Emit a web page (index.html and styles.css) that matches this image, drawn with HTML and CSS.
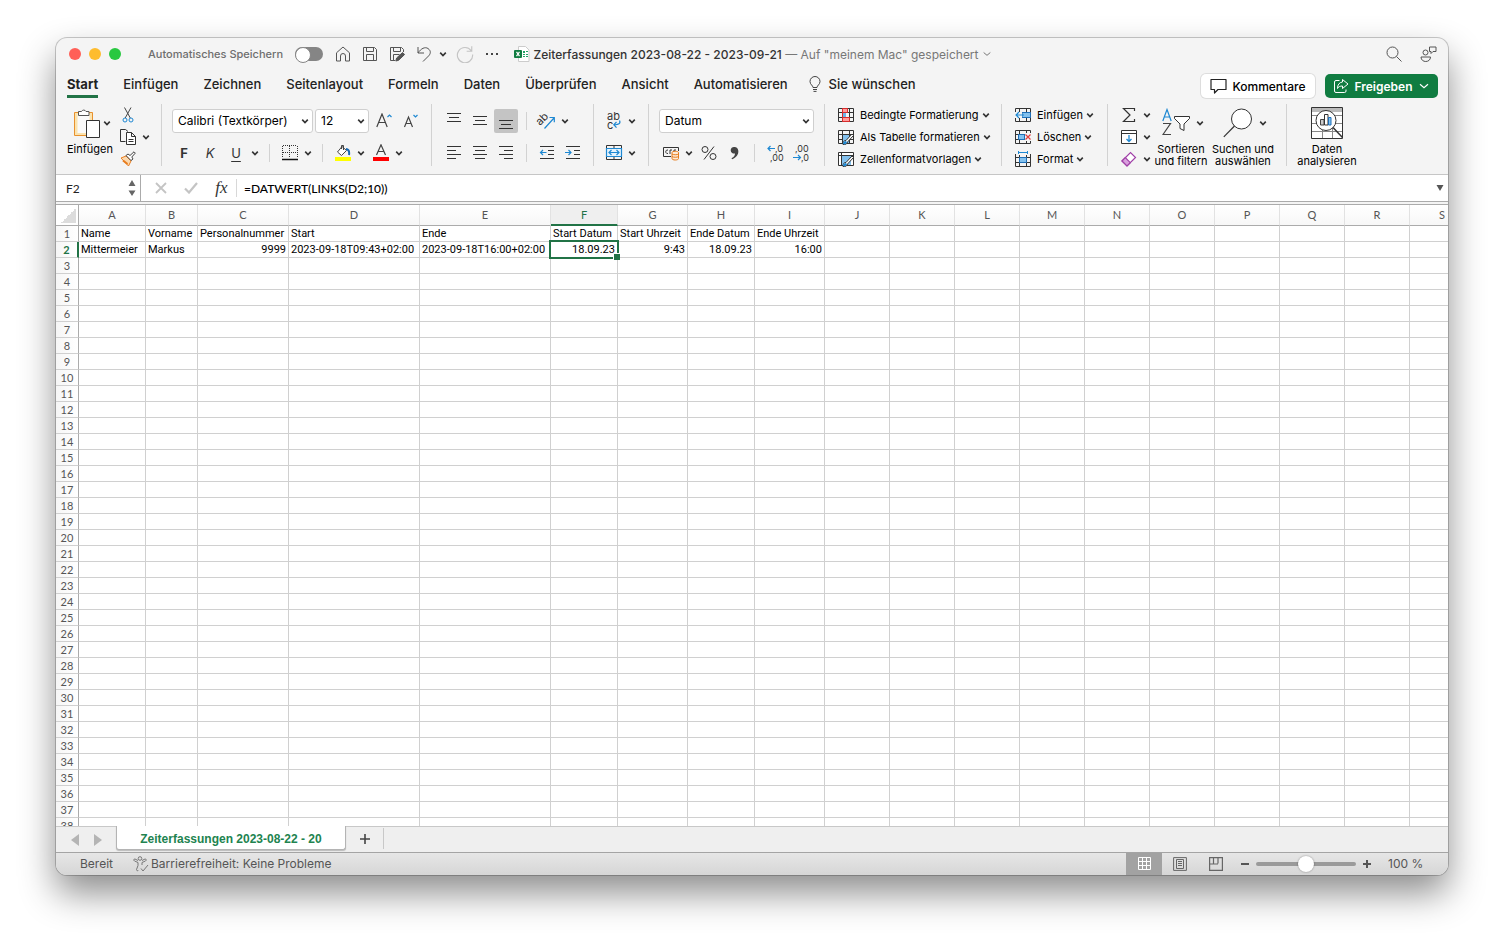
FILE: index.html
```html
<!DOCTYPE html>
<html lang="de">
<head>
    <meta charset="UTF-8">
    <meta name="viewport" content="width=device-width, initial-scale=1.0">
    <title>Zeiterfassungen 2023-08-22 - 2023-09-21</title>
    <link rel="stylesheet" href="styles.css">
</head>
<body>
    <svg class="defs" aria-hidden="true">
        <symbol id="caret" viewBox="0 0 12 12"><path d="M3.2 4.6L6 7.600L8.800 4.600" fill="none" stroke="#333" stroke-width="1.600"/></symbol>
        <symbol id="chev" viewBox="0 0 12 12"><path d="M2 4.200L6 7.600L10 4.200" fill="none" stroke="currentColor" stroke-width="1.200"/></symbol>
        <symbol id="cells" viewBox="0 0 16 16"><path d="M.5 1.500h15v13H.5zM.5 5.500h15M.5 10.500h15M4.500 1.500v13M11.500 1.500v13" fill="none" stroke="#333"/></symbol>
    </svg>

    <div class="window">
        <header class="titlebar">
            <div class="title-left">
                <div class="lights">
                    <button class="light red" aria-label="Schließen"></button>
                    <button class="light yellow" aria-label="Minimieren"></button>
                    <button class="light green" aria-label="Vollbild"></button>
                </div>
                <label class="autosave">Automatisches Speichern <input type="checkbox" class="toggle"></label>
                <div class="quick">
                    <button aria-label="Start"><svg width="16" height="16" viewBox="0 0 16 16"><path d="M1.500 6.800L8 1l6.500 5.800V15H10.500V10a2.500 2.500 0 0 0-5 0V15H1.500z"/></svg></button>
                    <button aria-label="Speichern"><svg width="16" height="16" viewBox="0 0 16 16"><path d="M1.500 1.500h11l2 2v11h-13zM4.500 1.500v4h7v-4M4.500 14.500v-6h7v6"/></svg></button>
                    <button aria-label="Kopie speichern"><svg width="16" height="16" viewBox="0 0 16 16"><path d="M14.500 6V3.500l-2-2h-11v13H6M4.500 1.500v4h7v-4M4.500 14.500v-6h6"/><path d="M6.800 15l.8-3 6-5.500 2 2-6 5.800z" fill="#555"/></svg></button>
                    <button aria-label="Rückgängig"><svg width="16" height="16" viewBox="0 0 16 16"><path d="M2 1v6h6M2 7c3-4.500 7-6.500 10-4.500 3.500 2.500 2.500 5.500.5 7.500L7 15.500"/></svg></button>
                    <button class="drop" aria-label="Mehr"><svg width="12" height="12"><use href="#caret"/></svg></button>
                    <button class="dim" aria-label="Wiederholen"><svg width="18" height="18" viewBox="0 0 16 16"><path d="M14 1v4.500H9.500M13.500 5A6.800 6.800 0 1 0 14.800 8.500"/></svg></button>
                    <button class="more" aria-label="Weitere Befehle"><svg width="14" height="4" viewBox="0 0 14 4"><path d="M1 1h2v2H1zM6 1h2v2H6zM11 1h2v2h-2z" fill="#444" stroke="none"/></svg></button>
                </div>
            </div>
            <div class="title">
                <svg width="16" height="16" viewBox="0 0 16 16"><path d="M4.500.5h7l3.500 3.500v11.500H4.500z" fill="#fff" stroke="#ccc"/><path d="M9 5h2v2H9zM9 8h2v1H9zM9 10h2v1H9zM12 5h2v1h-2zM12 8h2v1h-2zM12 10h2v1h-2z" fill="#21a366"/><rect y="4" width="8" height="8" rx="1" fill="#107c41"/><path d="M2.500 5.800l3 4.400M5.500 5.800l-3 4.400" stroke="#fff" stroke-width="1.200"/></svg>
                <span><span class="file">Zeiterfassungen 2023-08-22 - 2023-09-21</span> — Auf "meinem Mac" gespeichert</span>
                <svg width="10" height="10"><use href="#chev"/></svg>
            </div>
            <div class="title-right">
                <button aria-label="Suchen"><svg width="16" height="16" viewBox="0 0 16 16"><circle cx="6.500" cy="6.500" r="5.500"/><path d="M10.500 10.500l5 5"/></svg></button>
                <button aria-label="Feedback"><svg width="17" height="17" viewBox="0 0 17 17"><circle cx="5.500" cy="6.500" r="2.500"/><path d="M1 11h9.500c0 6-9.500 6-9.500 0zM9.500 1h6.500v4.500h-3L11 7.500V5.500H9.500z"/></svg></button>
            </div>
        </header>

        <nav class="tabs">
            <a href="#" class="tab active">Start</a>
            <a href="#" class="tab">Einfügen</a>
            <a href="#" class="tab">Zeichnen</a>
            <a href="#" class="tab">Seitenlayout</a>
            <a href="#" class="tab">Formeln</a>
            <a href="#" class="tab">Daten</a>
            <a href="#" class="tab">Überprüfen</a>
            <a href="#" class="tab">Ansicht</a>
            <a href="#" class="tab">Automatisieren</a>
            <a href="#" class="tab wish"><svg width="12" height="16" viewBox="0 0 12 16"><path d="M4 11.500c0-2-3-3-3-6a5 5 0 0 1 10 0c0 3-3 4-3 6zM4 13.500h4M4.500 15.400h3" fill="none" stroke="#444"/></svg>Sie wünschen</a>
            <div class="tab-actions">
                <button class="btn comments"><svg width="17" height="16" viewBox="0 0 17 16"><path d="M1 1.500h15v10H8l-3.500 3.500v-3.500H1z" fill="none" stroke="#222" stroke-width="1.200" stroke-linejoin="round"/></svg>Kommentare</button>
                <button class="btn share"><svg width="16" height="16" viewBox="0 0 16 16"><path d="M6.500 2.500H3a1.500 1.500 0 0 0-1.500 1.500v9A1.500 1.500 0 0 0 3 14.500h8.500a1.500 1.500 0 0 0 1.500-1.500v-1.500M9.500 4V1.500L15 6 9.500 10.500V8C7 8 5.500 8.700 4.500 10.500 4.500 6.500 6.500 4.300 9.500 4z" fill="none" stroke="#fff" stroke-linejoin="round"/></svg>Freigeben<svg width="12" height="12"><use href="#chev"/></svg></button>
            </div>
        </nav>

        <section class="ribbon">
            <div class="group clipboard">
                <button class="big">
                    <span class="big-icon"><svg width="28" height="30" viewBox="0 0 28 30"><path d="M1.500 4.500h18v23h-18z" fill="#fbe3ae" stroke="#e8912d"/><path d="M4.500 6h12v19h-12z" fill="#fafafa"/><path d="M5.500 7.500v-4h3a2.500 2.500 0 0 1 4.500 0h3v4z" fill="#fff" stroke="#555"/><path d="M13.500 12.500h13v17h-13z" fill="#fff" stroke="#333"/></svg><svg class="caret" width="12" height="12"><use href="#caret"/></svg></span>
                    Einfügen
                </button>
                <div class="stack">
                    <button aria-label="Ausschneiden"><svg width="16" height="16" viewBox="0 0 16 16"><path d="M4.500.5l5.800 10.500M11 .5L5.200 11" fill="none" stroke="#444"/><circle cx="5" cy="13" r="2" fill="none" stroke="#1e88d2"/><circle cx="11" cy="13" r="2" fill="none" stroke="#1e88d2"/></svg></button>
                    <button aria-label="Kopieren"><svg width="16" height="16" viewBox="0 0 16 16"><path d="M5.500 12.500h-5V.5h5l2.500 2" fill="none" stroke="#333"/><path d="M6.500 3.500h5l4 4v8h-9zM11.500 3.500v4h4M8.500 10.500h5M8.500 12.500h5" fill="#fff" stroke="#333"/></svg><svg class="caret" width="12" height="12"><use href="#caret"/></svg></button>
                    <button aria-label="Format übertragen"><svg width="16" height="16" viewBox="0 0 16 16"><path d="M1 7l5-2 5 5-2.500 5z" fill="#fbd9b0" stroke="#e87d1e"/><path d="M3 9.500l4.500 3.500" stroke="#e87d1e" stroke-width="2"/><path d="M6 4.500l2-1.500 2 1.500L14 .8l1.300 1.300L11.800 6l1.200 2-2 1.500z" fill="#fff" stroke="#444"/></svg></button>
                </div>
            </div>
            <div class="sep"></div>

            <div class="group rows font-group">
                <div class="row selects">
                    <label class="combo font-name"><select aria-label="Schriftart"><option>Calibri (Textkörper)</option></select><svg width="12" height="12"><use href="#caret"/></svg></label>
                    <label class="combo font-size"><select aria-label="Schriftgrad"><option>12</option></select><svg width="12" height="12"><use href="#caret"/></svg></label>
                    <button class="grow" aria-label="Schrift vergrößern"><svg width="16" height="16" viewBox="0 0 16 16"><path d="M.8 14L6 1l5.200 13M2.700 9.500h6.600" fill="none" stroke="#444" stroke-width="1.200"/><path d="M11.500 4l2-2 2 2" fill="none" stroke="#1e88d2" stroke-width="1.200"/></svg></button>
                    <button class="shrink" aria-label="Schrift verkleinern"><svg width="16" height="16" viewBox="0 0 16 16"><path d="M1.500 14L5.500 4l4 10M3 10.500h5" fill="none" stroke="#444" stroke-width="1.200"/><path d="M10.500 2l2 2 2-2" fill="none" stroke="#1e88d2" stroke-width="1.200"/></svg></button>
                </div>
                <div class="row styles">
                    <button class="letter bold">F</button>
                    <button class="letter italic">K</button>
                    <button class="letter underline">U</button>
                    <svg class="caret plain" width="12" height="12"><use href="#caret"/></svg>
                    <i class="divider"></i>
                    <button aria-label="Rahmen"><svg width="16" height="16" viewBox="0 0 16 16"><path d="M1 .5h14M.5 1v12M15.500 1v12M7.500 1v12M1 7.500h14" fill="none" stroke="#333" stroke-dasharray="1 1"/><path d="M0 14.500h16" stroke="#111" stroke-width="1.500"/></svg><svg class="caret" width="12" height="12"><use href="#caret"/></svg></button>
                    <i class="divider"></i>
                    <button aria-label="Füllfarbe"><svg width="16" height="18" viewBox="0 0 16 18"><path d="M7 2.500L2.500 8l4 3.500L11.500 6.500zM6.500 5V1.500h2V6" fill="#fff" stroke="#444"/><path d="M11 5c3 .5 3.500 3 3 6" fill="none" stroke="#1668b5" stroke-width="2"/><path d="M0 13h16v4H0z" fill="#ff0"/></svg><svg class="caret" width="12" height="12"><use href="#caret"/></svg></button>
                    <button class="font-color" aria-label="Schriftfarbe"><svg width="16" height="18" viewBox="0 0 16 18"><path d="M3.500 11L8 .8 12.500 11M5 7.500h6" fill="none" stroke="#444" stroke-width="1.200"/><path d="M0 13h16v4H0z" fill="#f00"/></svg><svg class="caret" width="12" height="12"><use href="#caret"/></svg></button>
                </div>
            </div>
            <div class="sep"></div>

            <div class="group rows align-group">
                <div class="row">
                    <button class="square" aria-label="Oben"><svg width="14" height="16" viewBox="0 0 14 16"><path d="M0 .5h14M2 4.500h10M0 8.500h14"/></svg></button>
                    <button class="square" aria-label="Mitte"><svg width="14" height="16" viewBox="0 0 14 16"><path d="M0 3.500h14M2 7.500h10M0 11.500h14"/></svg></button>
                    <button class="square on" aria-label="Unten"><svg width="14" height="16" viewBox="0 0 14 16"><path d="M0 7.500h14M2 11.500h10M0 15.500h14"/></svg></button>
                    <i class="divider"></i>
                    <button aria-label="Ausrichtung"><svg width="16" height="16" viewBox="0 0 16 16"><text x="0" y="11" font-size="11" fill="#333" stroke="none" transform="rotate(-45 3 11)">ab</text><path d="M5.500 15.500L15 5M10.500 4.500h4.800v4.800" class="blue"/></svg><svg class="caret" width="12" height="12"><use href="#caret"/></svg></button>
                </div>
                <div class="row">
                    <button class="square" aria-label="Links"><svg width="14" height="14" viewBox="0 0 14 14"><path d="M0 .5h14M0 4.500h9M0 8.500h14M0 12.500h9"/></svg></button>
                    <button class="square" aria-label="Zentriert"><svg width="14" height="14" viewBox="0 0 14 14"><path d="M0 .5h14M2 4.500h10M0 8.500h14M2 12.500h10"/></svg></button>
                    <button class="square" aria-label="Rechts"><svg width="14" height="14" viewBox="0 0 14 14"><path d="M0 .5h14M5 4.500h9M0 8.500h14M5 12.500h9"/></svg></button>
                    <i class="divider"></i>
                    <button aria-label="Einzug verkleinern"><svg width="16" height="14" viewBox="0 0 16 14"><path d="M1 .5h14M9 4.500h6M9 8.500h6M1 12.500h14"/><path d="M1.500 6.500h6M4 4L1.500 6.500 4 9" class="blue"/></svg></button>
                    <button class="indent" aria-label="Einzug vergrößern"><svg width="16" height="14" viewBox="0 0 16 14"><path d="M1 .5h14M9 4.500h6M9 8.500h6M1 12.500h14"/><path d="M0 6.500h6M3.500 4L6 6.500 3.500 9" class="blue"/></svg></button>
                </div>
            </div>
            <div class="sep"></div>

            <div class="group rows wrap-group">
                <div class="row"><button aria-label="Textumbruch"><svg width="16" height="20" viewBox="0 0 16 20"><text x="1" y="9" font-size="11" fill="#333" stroke="none">ab</text><text x="1" y="18" font-size="11" fill="#333" stroke="none">c</text><path d="M13.500 9.500c1.500 3-1 4.500-5.500 4.200M10.500 11L7.800 13.700l2.700 3" class="blue"/></svg><svg class="caret" width="12" height="12"><use href="#caret"/></svg></button></div>
                <div class="row"><button aria-label="Verbinden"><svg width="16" height="16" viewBox="0 0 16 16"><path d="M.5.500h15v14H.5zM8 .5v14"/><path d="M.5 3.500h15v8H.5z" class="blue box"/><path d="M3 7.500h10M5.500 5L3 7.500 5.500 10M10.500 5L13 7.500 10.500 10" class="blue"/></svg><svg class="caret" width="12" height="12"><use href="#caret"/></svg></button></div>
            </div>
            <div class="sep"></div>

            <div class="group rows number-group">
                <div class="row"><label class="combo number-format"><select aria-label="Zahlenformat"><option>Datum</option></select><svg width="12" height="12"><use href="#caret"/></svg></label></div>
                <div class="row numbers">
                    <button aria-label="Währung"><svg width="16" height="16" viewBox="0 0 16 16"><path d="M8 11.500H.5v-9h15V6M5 5c-3-.5-3 4 0 3.500M7 9V5h2M11 7V5h2"/><path d="M9 7.500v6c0 2 6.500 2 6.500 0v-6c0-1.600-6.500-1.600-6.500 0zM9 9c1 1 5.500 1 6.500 0M9 11.500c1 1 5.500 1 6.500 0" class="coins"/></svg><svg class="caret" width="12" height="12"><use href="#caret"/></svg></button>
                    <button class="percent" aria-label="Prozent"><svg width="16" height="16" viewBox="0 0 16 16"><circle cx="4" cy="4.500" r="3"/><circle cx="12" cy="11.500" r="3"/><path d="M13 1.500l-10 13"/></svg></button>
                    <button class="comma" aria-label="Komma"><svg width="10" height="14" viewBox="0 0 10 14"><path d="M4.500 1A3.300 3.300 0 1 0 5 7.400C4.800 9.500 4 11 1.500 12.200l.6 1C7 11.500 8.600 8 8.300 4.800 8.100 2.500 6.700 1 4.500 1z" fill="#444" stroke="none"/></svg></button>
                    <i class="divider"></i>
                    <button aria-label="Dezimalstelle hinzufügen"><svg width="18" height="20" viewBox="0 0 18 20"><text x="8" y="9" font-size="9" fill="#333" stroke="none">,0</text><text x="3" y="18" font-size="9" fill="#333" stroke="none">,00</text><path d="M1 5.500h7M3.500 3L1 5.500 3.500 8" class="blue"/></svg></button>
                    <button class="indent narrow" aria-label="Dezimalstelle entfernen"><svg width="18" height="20" viewBox="0 0 18 20"><text x="2" y="9" font-size="9" fill="#333" stroke="none">,00</text><text x="8" y="18" font-size="9" fill="#333" stroke="none">,0</text><path d="M0 14.500h7.500M5 12L7.500 14.500 5 17" class="blue"/></svg></button>
                </div>
            </div>
            <div class="sep"></div>

            <div class="group stack styles-group">
                <button class="item"><svg width="16" height="16" viewBox="0 0 16 16"><use href="#cells"/><path d="M4.500 1.500h5v4h-5zM4.500 10.500h7v4h-7z" fill="#ff9c9c" stroke="#d92b2b"/><path d="M4.500 5.500v5" stroke="#d92b2b"/><path d="M5 6h3v4H5z" fill="#6db5ea"/></svg>Bedingte Formatierung<svg class="caret" width="12" height="12"><use href="#caret"/></svg></button>
                <button class="item"><svg width="16" height="16" viewBox="0 0 16 16"><use href="#cells"/><path d="M5 6h6v8H5z" fill="#83c1ee"/><path d="M5 15.500c0-3 1-4 3-4l6-6.500 1.500 1.500-6 6.500c-.5 2-2 2.800-4.500 2.500z" fill="#fff" stroke="#333"/><path d="M5 15c0-2 1.500-3 3-3l1 1.500c-1 1.800-2.500 2-4 1.500z" fill="#1e88d2"/></svg>Als Tabelle formatieren<svg class="caret" width="12" height="12"><use href="#caret"/></svg></button>
                <button class="item"><svg width="16" height="16" viewBox="0 0 16 16"><path d="M.5 1.500h15v13H.5zM.5 4.500h15M3.500 1.500v13" fill="#fff" stroke="#333"/><path d="M4 5h9v9H4z" fill="#83c1ee"/><path d="M5 15.500c0-3 1-4 3-4l6-6.500 1.500 1.500-6 6.500c-.5 2-2 2.800-4.500 2.500z" fill="#fff" stroke="#333"/><path d="M5 15c0-2 1.500-3 3-3l1 1.500c-1 1.800-2.500 2-4 1.500z" fill="#1e88d2"/></svg>Zellenformatvorlagen<svg class="caret" width="12" height="12"><use href="#caret"/></svg></button>
            </div>
            <div class="sep"></div>

            <div class="group stack cells-group">
                <button class="item"><svg width="16" height="16" viewBox="0 0 16 16"><use href="#cells"/><path d="M7 5.500h8.500v5H7z" fill="#83c1ee" stroke="#1e6fb8"/><path d="M0 5h7v6H0z" fill="#f4f4f4"/><path d="M1 8h8M4 5L1 8l3 3" fill="none" stroke="#1e88d2" stroke-width="1.200"/></svg>Einfügen<svg class="caret" width="12" height="12"><use href="#caret"/></svg></button>
                <button class="item"><svg width="16" height="16" viewBox="0 0 16 16"><use href="#cells"/><path d="M3.500 5.500h6v5h-6z" fill="#83c1ee" stroke="#1e6fb8"/><path d="M10 4h6v8h-6z" fill="#f4f4f4"/><path d="M10.500 5.500l5 5M15.500 5.500l-5 5" stroke="#e03c3c" stroke-width="1.200"/></svg>Löschen<svg class="caret" width="12" height="12"><use href="#caret"/></svg></button>
                <button class="item"><svg width="16" height="16" viewBox="0 0 16 16"><path d="M.5 3v12.500h15V3M.5 6.500h15M.5 11.500h15M4.500 4v11M11.500 4v11" fill="none" stroke="#333"/><path d="M4.500 6.500h7v5h-7z" fill="#83c1ee" stroke="#1e6fb8"/><path d="M3.500 0v3M12.500 0v3M3.500 1.500h9" stroke="#1e88d2" fill="none"/></svg>Format<svg class="caret" width="12" height="12"><use href="#caret"/></svg></button>
            </div>
            <div class="sep"></div>

            <div class="group edit-group">
                <div class="stack">
                    <button aria-label="Summe"><svg width="16" height="16" viewBox="0 0 16 16"><path d="M13.500 4V1.500h-11L9 8l-6.500 6.500h11V12" fill="none" stroke="#333" stroke-width="1.200"/></svg><svg class="caret" width="12" height="12"><use href="#caret"/></svg></button>
                    <button aria-label="Ausfüllen"><svg width="16" height="16" viewBox="0 0 16 16"><path d="M.5 1.500h15v13H.5zM.5 4.500h15" fill="#fff" stroke="#333"/><path d="M8 6v6.500M5.500 10L8 12.500l2.500-2.500" fill="none" stroke="#1e88d2" stroke-width="1.300"/></svg><svg class="caret" width="12" height="12"><use href="#caret"/></svg></button>
                    <button aria-label="Löschen"><svg width="16" height="16" viewBox="0 0 16 16"><path d="M1 10L9.500 1.500l5 5L6 15z" fill="#fff" stroke="#a040a8" stroke-width="1.200"/><path d="M1 10l3.300-3.300 5 5L6 15z" fill="#d9a0dd" stroke="#a040a8" stroke-width="1.200"/></svg><svg class="caret" width="12" height="12"><use href="#caret"/></svg></button>
                </div>
                <button class="big sort">
                    <span class="big-icon"><svg width="28" height="30" viewBox="0 0 28 30"><path d="M.8 13L5 1.500 9.200 13M2.300 9h5.400" fill="none" stroke="#1e88d2" stroke-width="1.200"/><path d="M1 15.500h7.500L1 26.500h8" fill="none" stroke="#444" stroke-width="1.200"/><path d="M12.500 8.500h15v2L22 16v6.500l-4-2V16l-5.500-5.500z" fill="#fff" stroke="#333"/></svg><svg class="caret" width="12" height="12"><use href="#caret"/></svg></span>
                    Sortieren<br>und filtern
                </button>
                <button class="big find">
                    <span class="big-icon"><svg width="30" height="30" viewBox="0 0 30 30"><circle cx="18.500" cy="11" r="10" fill="#fff" stroke="#333"/><path d="M11.500 18L.8 28.800" stroke="#333" stroke-width="1.200"/></svg><svg class="caret" width="12" height="12"><use href="#caret"/></svg></span>
                    Suchen und<br>auswählen
                </button>
            </div>
            <div class="sep"></div>

            <div class="group analyse-group">
                <button class="big">
                    <span class="big-icon"><svg width="32" height="32" viewBox="0 0 32 32"><path d="M.5.500h31v31H.5z" fill="#fff" stroke="#333"/><path d="M1 1h30v4H1z" fill="#bbb"/><path d="M1 8.500h30M1 16.500h30M1 24.500h30M11.500 20v11M21.500 20v11" stroke="#888" fill="none"/><circle cx="15" cy="13.500" r="10" fill="#fff" stroke="#333"/><path d="M22 20.500l9.500 10" stroke="#333" stroke-width="1.500"/><path d="M9.500 12.500h3.500v5.500H9.500z" fill="#ccc" stroke="#444"/><path d="M13.500 7.500h3.500v10.500h-3.500z" fill="#fff" stroke="#333"/><path d="M17.500 10.500H20v7.500h-2.500z" fill="#83c1ee" stroke="#1e6fb8"/></svg></span>
                    Daten<br>analysieren
                </button>
            </div>
        </section>

        <section class="formula-bar">
            <div class="name-box">
                <input type="text" value="F2" aria-label="Namenfeld">
                <svg width="8" height="18" viewBox="0 0 8 18"><path d="M4 1l3.500 6h-7zM4 17l3.500-5.500h-7z" fill="#666"/></svg>
            </div>
            <button class="cancel" aria-label="Abbrechen"><svg width="12" height="12" viewBox="0 0 12 12"><path d="M1 1l10 10M11 1L1 11" stroke="#c4c4c4" stroke-width="1.800"/></svg></button>
            <button class="confirm" aria-label="Eingeben"><svg width="14" height="12" viewBox="0 0 14 12"><path d="M1 6.500l4 4L13 1" fill="none" stroke="#c4c4c4" stroke-width="2.200"/></svg></button>
            <button class="fx">fx</button>
            <input class="formula" type="text" value="=DATWERT(LINKS(D2;10))" aria-label="Formel">
            <button class="expand" aria-label="Erweitern"><svg width="8" height="6" viewBox="0 0 8 6"><path d="M.5 0h7L4 6z" fill="#555"/></svg></button>
        </section>

        <main class="sheet">
            <table>
                <colgroup id="cols"></colgroup>
                <thead><tr id="letters"><th class="corner"></th></tr></thead>
                <tbody id="rows"></tbody>
            </table>
        </main>

        <div class="sheet-tabs">
            <button class="nav" aria-label="Zurück"><svg width="8" height="12" viewBox="0 0 8 12"><path d="M8 0v12L0 6z" fill="#b4b4b4"/></svg></button>
            <button class="nav" aria-label="Weiter"><svg width="8" height="12" viewBox="0 0 8 12"><path d="M0 0v12l8-6z" fill="#b4b4b4"/></svg></button>
            <button class="sheet-tab">Zeiterfassungen 2023-08-22 - 20</button>
            <button class="add" aria-label="Blatt hinzufügen"><svg width="12" height="12" viewBox="0 0 12 12"><path d="M6 1v10M1 6h10" stroke="#444" stroke-width="1.600"/></svg></button>
        </div>

        <footer class="status">
            <span class="ready">Bereit</span>
            <button class="a11y"><svg width="16" height="16" viewBox="0 0 16 16"><circle cx="7" cy="2.500" r="1.800"/><path d="M5 4.500L2 3C.5 2.800.5 4.500 1.500 5l3.500 1.500v3L3.500 13.500c0 1.500 1.500 1.500 2 .5M9 4.500l3-1.500c1.500-.2 1.500 1.500.5 2L9 6.500V9M8 12.500l2 2.500 5-6"/></svg>Barrierefreiheit: Keine Probleme</button>
            <div class="view-modes">
                <button class="on" aria-label="Normal"><svg width="13" height="13" viewBox="0 0 13 13"><path d="M.5.500h12v12H.5zM.5 4.500h12M.5 8.500h12M4.500.5v12M8.500.5v12" fill="none" stroke="#fff"/></svg></button>
                <button aria-label="Seitenlayout"><svg width="14" height="14" viewBox="0 0 14 14"><path d="M.6.600h12.800v12.800H.6zM3.500 2.500h7v9h-7zM5 4.500h4M5 6.500h4M5 8.500h4" fill="none" stroke="#666"/></svg></button>
                <button aria-label="Umbruchvorschau"><svg width="14" height="14" viewBox="0 0 14 14"><path d="M.6.600h12.800v12.800H.6zM4.500.5v6M9 .5v6M.5 7h8.500" fill="none" stroke="#666" stroke-width="1.200"/></svg></button>
            </div>
            <button class="zoom-btn" aria-label="Verkleinern"><svg width="8" height="8" viewBox="0 0 8 8"><path d="M0 4h8" stroke="#555" stroke-width="2"/></svg></button>
            <input class="zoom" type="range" min="0" max="100" value="50" aria-label="Zoom">
            <button class="zoom-btn" aria-label="Vergrößern"><svg width="8" height="8" viewBox="0 0 8 8"><path d="M0 4h8M4 0v8" stroke="#555" stroke-width="2"/></svg></button>
            <span class="percent-label">100 %</span>
        </footer>
    </div>

    <script>
  const columns = {A: 67, B: 52, C: 91, D: 131, E: 131, F: 67, G: 70, H: 67, I: 70};
  const letters = "ABCDEFGHIJKLMNOPQRS".split("");
  const data = [
    ["Name", "Vorname", "Personalnummer", "Start", "Ende", "Start Datum", "Start Uhrzeit", "Ende Datum", "Ende Uhrzeit"],
    ["Mittermeier", "Markus", "9999", "2023-09-18T09:43+02:00", "2023-09-18T16:00+02:00", "18.09.23", "9:43", "18.09.23", "16:00"]
  ];
  const numeric = ["C", "F", "G", "H", "I"];

  const cols = document.getElementById("cols");
  cols.appendChild(document.createElement("col")).style.width = "23px";
  letters.forEach(function (letter) {
    cols.appendChild(document.createElement("col")).style.width = (columns[letter] || 65) + "px";
    const th = document.createElement("th");
    th.textContent = letter;
    if (letter == "F") th.className = "current";
    document.getElementById("letters").appendChild(th);
  });

  for (let r = 1; r <= 38; r++) {
    const tr = document.createElement("tr");
    const th = document.createElement("th");
    th.textContent = r;
    if (r == 2) th.className = "current";
    tr.appendChild(th);
    letters.forEach(function (letter, i) {
      const td = document.createElement("td");
      td.textContent = (data[r - 1] || [])[i] || "";
      if (r == 2 && numeric.includes(letter)) td.className = "num";
      if (r == 2 && letter == "F") td.classList.add("selected");
      tr.appendChild(td);
    });
    document.getElementById("rows").appendChild(tr);
  }
    </script>
</body>
</html>
```
FILE: styles.css
```css
* {
    box-sizing: border-box;
}

body {
    margin: 0;
    height: 100vh;
    padding: 38px 56px 74px;
    display: flex;
    background: #fff;
    font-family: Inter, sans-serif;
    font-size: 11px;
    color: #222;
    overflow: hidden;
}

button, input, select {
    font: inherit;
    color: inherit;
    border: none;
    background: none;
    padding: 0;
    margin: 0;
    outline: none;
}

button {
    display: flex;
    align-items: center;
    justify-content: center;
}

svg {
    display: block;
    flex-shrink: 0;
}

.defs {
    display: none;
}

.window {
    flex: 1;
    min-width: 0;
    display: flex;
    flex-direction: column;
    border-radius: 11px;
    background: #f4f4f4;
    overflow: hidden;
    box-shadow: 0 0 0 1px rgba(0, 0, 0, 0.2), 0 18px 36px rgba(0, 0, 0, 0.45);
}

/* title bar */
.titlebar {
    display: grid;
    grid-template-columns: 1fr auto 1fr;
    align-items: center;
    height: 32px;
    flex-shrink: 0;
    padding: 0 11px 0 13px;
}

.title-left, .lights, .autosave, .quick, .title, .title-right {
    display: flex;
    align-items: center;
}

.lights {
    gap: 8px;
}

.light {
    width: 12px;
    height: 12px;
    border-radius: 50%;
}

.red { background: #ff5f57; }
.yellow { background: #febc2e; }
.green { background: #28c840; }

.autosave {
    margin-left: 27px;
    gap: 12px;
    font-weight: 500;
    color: #6e6e6e;
    white-space: nowrap;
}

.toggle {
    appearance: none;
    width: 28px;
    height: 14px;
    border-radius: 7px;
    background: #858585;
}

.toggle::before {
    content: "";
    display: block;
    width: 14px;
    height: 14px;
    border: 1px solid #858585;
    border-radius: 50%;
    background: #fff;
}

.quick {
    margin-left: 12px;
    gap: 11px;
}

.quick svg, .title-right svg {
    fill: none;
    stroke: #555;
}

.quick .drop {
    margin: 0 -4px 0 -6px;
}

.quick .dim svg {
    stroke: #c4c4c4;
}

.title {
    gap: 3px;
    font-size: 12px;
    color: #777;
    white-space: nowrap;
}

.file {
    font-weight: 500;
    color: #333;
}

.title-right {
    justify-content: flex-end;
    gap: 18px;
}

/* ribbon tabs */
.tabs {
    display: flex;
    height: 30px;
    flex-shrink: 0;
    padding: 0 10px 0 11px;
    gap: 25px;
}

.tab {
    display: flex;
    align-items: center;
    height: 28px;
    padding-top: 3px;
    border-bottom: 3px solid transparent;
    font-size: 13px;
    font-weight: 500;
    color: #222;
    text-decoration: none;
    white-space: nowrap;
}

.tab.active {
    border-bottom-color: #217346;
    font-weight: 700;
}

.wish {
    gap: 8px;
    margin-left: -4px;
}

.tab-actions {
    display: flex;
    gap: 10px;
    margin-left: auto;
    padding-top: 4px;
}

.btn {
    height: 24px;
    gap: 5px;
    border-radius: 5px;
    font-size: 12px;
    font-weight: 500;
}

.comments {
    width: 114px;
    background: #fff;
    color: #000;
    box-shadow: 0 0 0 1px #ddd;
}

.share {
    width: 113px;
    background: #107c41;
    color: #fff;
    font-weight: 600;
}

/* ribbon */
.ribbon {
    display: flex;
    height: 75px;
    flex-shrink: 0;
    padding-top: 4px;
    border-bottom: 1px solid #c6c6c6;
    color: #000;
}

.ribbon button {
    white-space: nowrap;
}

.sep {
    width: 1px;
    height: 62px;
    flex-shrink: 0;
    background: #d2d2d2;
}

.group {
    display: flex;
    flex-shrink: 0;
    height: 66px;
}

.rows {
    flex-direction: column;
    gap: 8px;
    padding-top: 5px;
}

.row {
    display: flex;
    align-items: center;
    height: 24px;
}

.stack {
    display: flex;
    flex-direction: column;
}

.stack button {
    height: 22px;
    justify-content: flex-start;
}

.caret {
    margin-left: 4px;
}

.caret.plain {
    margin-left: 0;
}

.divider {
    width: 1px;
    height: 18px;
    margin: 0 12px 0 8px;
    background: #d2d2d2;
}

.big {
    flex-direction: column;
    justify-content: flex-start;
    line-height: 12px;
    text-align: center;
}

.big-icon {
    display: flex;
    align-items: center;
    height: 32px;
    margin: 3px 0 4px;
}

.clipboard {
    width: 105px;
    padding-left: 10px;
    gap: 6px;
}

.clipboard .big {
    width: 48px;
}

.clipboard .big-icon {
    padding-left: 6px;
}

.clipboard .big-icon .caret {
    margin-left: 0;
}

.font-group {
    width: 269px;
    padding-left: 10px;
}

.selects {
    gap: 2px;
}

.styles {
    margin-left: -1px;
}

.combo {
    position: relative;
    height: 24px;
    border: 1px solid #cfcfcf;
    border-radius: 3px;
    background: #fff;
}

.combo select {
    appearance: none;
    display: block;
    width: 100%;
    height: 22px;
    padding: 0 18px 1px 5px;
    font-size: 12px;
    color: #000;
}

.combo svg {
    position: absolute;
    right: 1px;
    top: 5px;
}

.font-name { width: 141px; }
.font-size { width: 54px; }
.number-format { width: 155px; }

.grow { margin-left: 5px; }
.shrink { margin-left: 9px; }

.letter {
    width: 26px;
    height: 24px;
    font-size: 13px;
    color: #333;
}

.bold { font-weight: 700; }
.italic { font-style: italic; }
.underline { text-decoration: underline; text-underline-offset: 3px; }

.font-color {
    margin-left: 6px;
}

.align-group {
    width: 161px;
    padding-left: 10px;
}

.square {
    width: 24px;
    height: 24px;
    margin-right: 2px;
    border-radius: 2px;
}

.square.on {
    background: #c4c4c4;
}

.square + .divider {
    margin-left: 6px;
}

.align-group svg, .wrap-group svg, .numbers svg {
    fill: none;
    stroke: #333;
    overflow: visible;
}

.row .blue {
    stroke: #1e88d2;
    stroke-width: 1.2;
}

.row .box {
    fill: #e4f2fc;
}

.coins {
    fill: #fdebd8;
    stroke: #e87d1e;
}

.indent {
    margin-left: 10px;
}

.narrow {
    margin-left: 8px;
}

.wrap-group {
    width: 54px;
    padding-left: 12px;
}

.number-group {
    width: 175px;
    padding-left: 10px;
}

.numbers {
    padding-left: 4px;
}

.percent { margin-left: 6px; }
.comma { margin: 0 6px 0 13px; }

.item svg:first-child {
    margin-right: 6px;
}

.item .caret {
    margin-left: 1px;
}

.styles-group {
    width: 176px;
    padding-left: 13px;
}

.cells-group {
    width: 105px;
    padding-left: 13px;
}

.edit-group {
    width: 178px;
    padding-left: 13px;
}

.sort {
    width: 60px;
    margin-left: -2px;
}

.find {
    width: 64px;
}

.sort .big-icon, .find .big-icon {
    padding-left: 5px;
}

.analyse-group {
    padding-left: 10px;
}

.analyse-group .big {
    width: 60px;
}

/* formula bar */
.formula-bar {
    display: flex;
    align-items: center;
    height: 30px;
    flex-shrink: 0;
    padding-bottom: 3px;
    background: #fff;
    border-bottom: 1px solid #ababab;
    box-shadow: inset 0 -2px #f4f4f4, inset 0 -3px #ababab;
}

.name-box {
    display: flex;
    align-items: center;
    width: 85px;
    height: 26px;
    padding: 0 4px 0 10px;
    border-right: 1px solid #ababab;
    font-family: Lato, sans-serif;
    font-size: 12px;
}

.name-box input {
    flex: 1;
    min-width: 0;
}

.cancel { margin-left: 14px; }
.confirm { margin-left: 17px; }

.fx {
    width: 36px;
    height: 18px;
    margin: 0 7px 0 3px;
    padding-left: 6px;
    border-right: 1px solid #d8d8d8;
    font: italic 17px "Liberation Serif", serif;
    color: #333;
}

.formula {
    flex: 1;
    font-family: Lato, sans-serif;
    font-size: 12px;
    font-weight: 500;
    color: #000;
}

.expand {
    margin-right: 4px;
}

/* grid */
.sheet {
    flex: 1;
    min-height: 0;
    overflow: hidden;
    background: #fff;
}

table {
    table-layout: fixed;
    width: 1419px;
    border-collapse: separate;
    border-spacing: 0;
    font-family: Roboto, sans-serif;
    font-size: 11px;
}

th, td {
    height: 16px;
    padding: 0 2px;
    border-right: 1px solid #d0d0d0;
    border-bottom: 1px solid #d0d0d0;
    line-height: 15px;
    white-space: nowrap;
    color: #000;
}

th {
    padding: 0;
    font-family: Lato, sans-serif;
    font-weight: 400;
    color: #555;
    background: linear-gradient(to right, #f6f6f6, #fff);
}

tbody th, .corner {
    border-right-color: #ababab;
}

thead th {
    height: 21px;
    padding-bottom: 1px;
    border-bottom-color: #ababab;
    border-right-color: #e2e2e2;
    background: linear-gradient(#fff, #f7f7f7);
}

.corner {
    background: linear-gradient(135deg, transparent 50%, #dcdcdc 50%);
    background-clip: content-box;
    background-origin: content-box;
    padding: 3px 2px 2px 5px;
}

thead .current {
    padding-bottom: 0;
    background: #efefef;
    color: #217346;
    border-bottom: 2px solid #217346;
}

tbody .current {
    color: #217346;
    font-weight: 700;
    border-right: 2px solid #217346;
}

.num {
    text-align: right;
}

.selected {
    position: relative;
}

.selected::before {
    content: "";
    position: absolute;
    inset: -2px;
    border: 2px solid #217346;
}

.selected::after {
    content: "";
    position: absolute;
    right: -3px;
    bottom: -3px;
    width: 6px;
    height: 6px;
    background: #217346;
    border: solid #fff;
    border-width: 1px 0 0 1px;
}

/* sheet tabs */
.sheet-tabs {
    display: flex;
    height: 26px;
    flex-shrink: 0;
    background: #efefef;
    border-top: 1px solid #c8c8c8;
}

.nav {
    padding-left: 15px;
}

.sheet-tab {
    width: 230px;
    height: 24px;
    margin: -1px 0 0 14px;
    padding-top: 2px;
    background: #fff;
    border: 1px solid #b4b4b4;
    border-top: none;
    border-radius: 0 0 3px 3px;
    box-shadow: 0 1px 1px #bbb;
    font: bold 12px "Liberation Sans", sans-serif;
    color: #21834f;
}

.add {
    width: 38px;
    height: 21px;
    border-right: 1px solid #c8c8c8;
    margin-top: 1px;
}

/* status bar */
.status {
    display: flex;
    align-items: center;
    height: 23px;
    flex-shrink: 0;
    padding: 0 0 1px 24px;
    background: linear-gradient(#e6e6e6, #d6d6d6);
    border-top: 1px solid #a4a4a4;
    font-size: 12px;
    color: #555;
    white-space: nowrap;
}

.a11y {
    gap: 2px;
    margin-left: 20px;
}

.a11y svg {
    fill: none;
    stroke: #777;
}

.view-modes {
    display: flex;
    height: 22px;
    margin-left: auto;
}

.view-modes button {
    width: 36px;
}

.view-modes .on {
    background: #a2a2a2;
}

.zoom-btn {
    margin: 0 7px;
}

.zoom {
    appearance: none;
    width: 100px;
    height: 4px;
    border-radius: 2px;
    background: #9a9a9a;
}

.zoom::-webkit-slider-thumb {
    appearance: none;
    width: 16px;
    height: 16px;
    border-radius: 50%;
    background: #fff;
    box-shadow: 0 0 2px rgba(0, 0, 0, 0.4);
}

.percent-label {
    width: 60px;
    margin-left: 10px;
}
```
